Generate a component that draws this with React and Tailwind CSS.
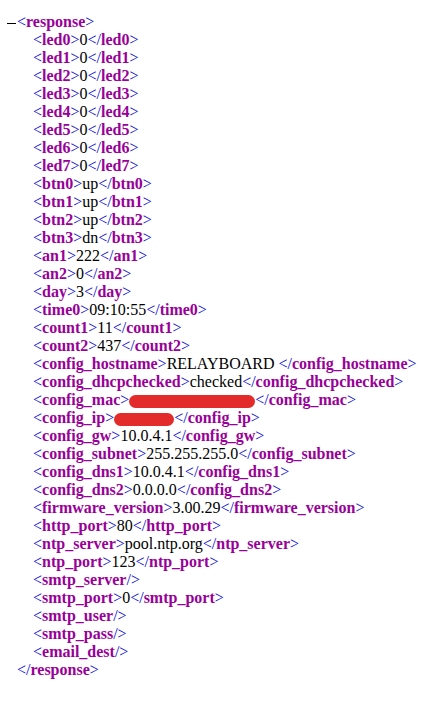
const lines = [
  ["led0", "0"], ["led1", "0"], ["led2", "0"], ["led3", "0"], ["led4", "0"],
  ["led5", "0"], ["led6", "0"], ["led7", "0"],
  ["btn0", "up"], ["btn1", "up"], ["btn2", "up"], ["btn3", "dn"],
  ["an1", "222"], ["an2", "0"], ["day", "3"], ["time0", "09:10:55"],
  ["count1", "11"], ["count2", "437"],
  ["config_hostname", "RELAYBOARD "], ["config_dhcpchecked", "checked"],
  ["config_mac", null, 126], ["config_ip", null, 60],
  ["config_gw", "10.0.4.1"], ["config_subnet", "255.255.255.0"],
  ["config_dns1", "10.0.4.1"], ["config_dns2", "0.0.0.0"],
  ["firmware_version", "3.00.29"], ["http_port", "80"],
  ["ntp_server", "pool.ntp.org"], ["ntp_port", "123"],
  ["smtp_server"], ["smtp_port", "0"], ["smtp_user"], ["smtp_pass"], ["email_dest"],
];

// markup brackets blue, tag names bold purple (IE xml view)
const M = ({ children }) => <span className="text-[#0a0ad8]">{children}</span>;
const T = ({ children }) => <span className="font-bold text-[#990099]">{children}</span>;

function Line({ name, value, redact }) {
  if (value === undefined && !redact) {
    return (
      <div className="h-[18px]">
        <M>&lt;</M><T>{name}</T><M>/&gt;</M>
      </div>
    );
  }
  return (
    <div className="h-[18px]">
      <M>&lt;</M><T>{name}</T><M>&gt;</M>
      {redact ? (
        <span
          className="inline-block h-[13px] align-middle rounded-full bg-[#e32b2b]"
          style={{ width: redact }}
        />
      ) : (
        <span className="text-black">{value}</span>
      )}
      <M>&lt;/</M><T>{name}</T><M>&gt;</M>
    </div>
  );
}

export default function App() {
  return (
    <div className="w-[440px] h-[708px] bg-white pt-[13px] font-['Liberation_Serif',serif] text-[16px] leading-[18px] text-black">
      <div className="flex items-center h-[18px]">
        <span className="w-[17px] pl-[7px] flex items-center">
          <span className="block w-[9px] h-px bg-black mt-[2px]" />
        </span>
        <span>
          <M>&lt;</M><T>response</T><M>&gt;</M>
        </span>
      </div>
      <div className="pl-[33px]">
        {lines.map(([name, value, redact]) => (
          <Line key={name} name={name} value={value} redact={redact} />
        ))}
      </div>
      <div className="pl-[17px]">
        <M>&lt;/</M><T>response</T><M>&gt;</M>
      </div>
    </div>
  );
}
